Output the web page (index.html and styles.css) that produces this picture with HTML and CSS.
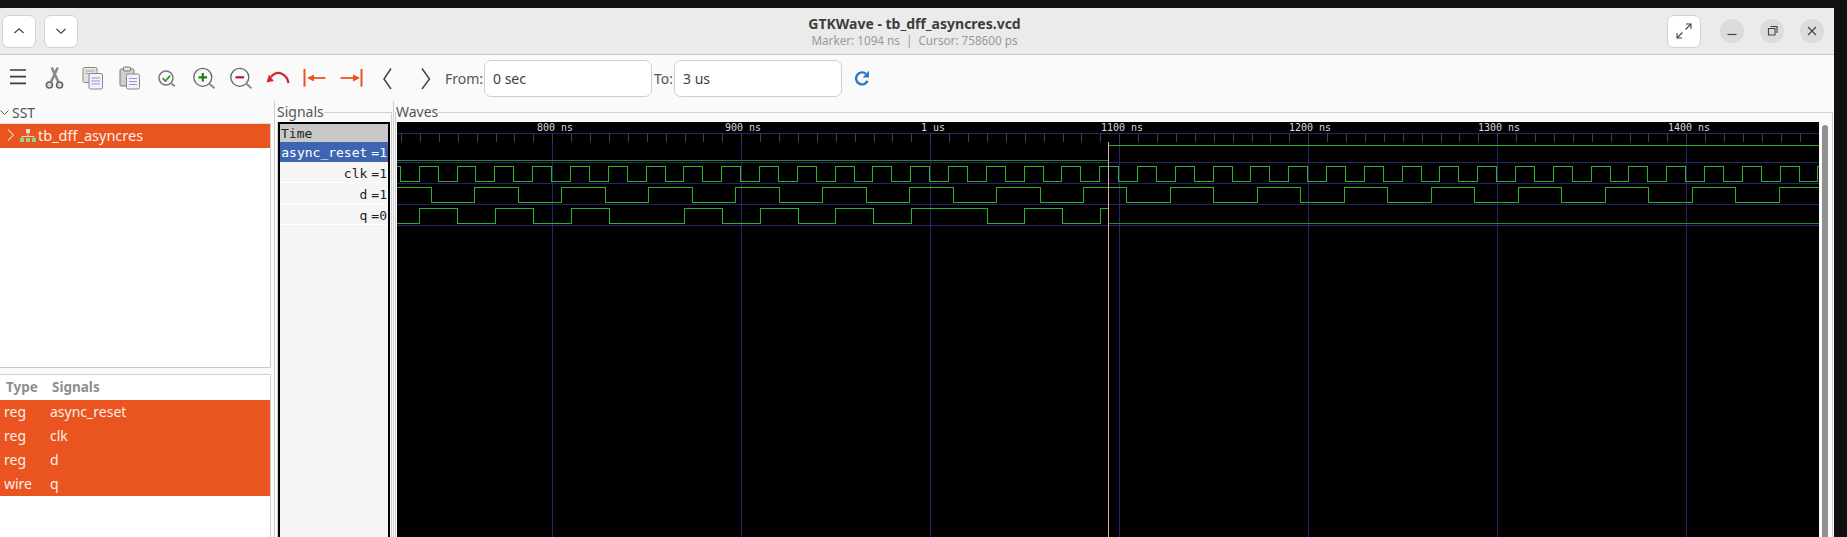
FILE: index.html
```html
<!DOCTYPE html>
<html lang="en">
<head>
    <meta charset="UTF-8">
    <title>GTKWave - tb_dff_asyncres.vcd</title>
    <link rel="stylesheet" href="styles.css">
</head>
<body>
<div class="window">
    <header class="titlebar">
        <div class="title-left">
            <button class="head-btn"><svg width="14" height="14" viewBox="0 0 14 14"><path d="M2.5 9L7 4.8 11.5 9" fill="none" stroke="#444" stroke-width="1.2"/></svg></button>
            <button class="head-btn"><svg width="14" height="14" viewBox="0 0 14 14"><path d="M2.5 5L7 9.2 11.5 5" fill="none" stroke="#444" stroke-width="1.2"/></svg></button>
        </div>
        <div class="title-text">
            <div class="title-main">GTKWave - tb_dff_asyncres.vcd</div>
            <div class="title-sub">Marker: 1094 ns &nbsp;|&nbsp; Cursor: 758600 ps</div>
        </div>
        <div class="title-right">
            <button class="head-btn expand"><svg width="18" height="18" viewBox="0 0 18 18"><path d="M10.5 7.5L16 2M11 2h5v5M7.5 10.5L2 16M2 11v5h5" fill="none" stroke="#444" stroke-width="1.1"/></svg></button>
            <button class="win-btn"><svg width="14" height="14" viewBox="0 0 14 14"><path d="M2.5 10.5h9" stroke="#444" stroke-width="1.2"/></svg></button>
            <button class="win-btn"><svg width="14" height="14" viewBox="0 0 14 14"><path d="M3.5 4.5h6.5v6.5H3.5zM5.5 2.5h6.5v6.5" fill="none" stroke="#444" stroke-width="1.1"/></svg></button>
            <button class="win-btn"><svg width="14" height="14" viewBox="0 0 14 14"><path d="M3 3l8 8M11 3l-8 8" stroke="#444" stroke-width="1.2"/></svg></button>
        </div>
    </header>

    <div class="toolbar">
        <button class="tool"><svg width="24" height="24" viewBox="0 0 24 24"><path d="M3 4h16M3 10.7h16M3 17.3h16" stroke="#3d3d3d" stroke-width="1.7"/></svg></button>
        <button class="tool"><svg width="24" height="24" viewBox="0 0 24 24"><path d="M7 16L13.7 1.5M14.4 16L7.7 1.5" stroke="#8a8a8a" stroke-width="2.6" fill="none"/><circle cx="5.4" cy="19" r="3" fill="#ddd" stroke="#666" stroke-width="1.6"/><circle cx="15.6" cy="19" r="3" fill="#ddd" stroke="#666" stroke-width="1.6"/></svg></button>
        <button class="tool"><svg width="24" height="24" viewBox="0 0 24 24"><rect x="2" y="1.5" width="14" height="15" rx="1.5" fill="#e2e2e2" stroke="#8a8a8a"/><path d="M4.5 5h9M4.5 7.5h9" stroke="#aaa"/><rect x="8" y="7.5" width="13.5" height="15.5" rx="1.5" fill="#f2f2fa" stroke="#888"/><path d="M10.5 12h8.5M10.5 15h8.5M10.5 18h8.5" stroke="#9094d4"/></svg></button>
        <button class="tool"><svg width="24" height="24" viewBox="0 0 24 24"><rect x="2" y="3" width="14" height="17" rx="1.5" fill="#d0d0d0" stroke="#777"/><rect x="5.5" y="1" width="7" height="4" rx="1" fill="#e4e4e4" stroke="#777"/><rect x="8.5" y="8" width="13" height="15" rx="1.5" fill="#f2f2fa" stroke="#888"/><path d="M11 12.5h8M11 15.5h8M11 18.5h8" stroke="#9094d4"/></svg></button>
        <button class="tool"><svg width="24" height="24" viewBox="0 0 24 24"><circle cx="11" cy="12" r="7" fill="#fafafa" stroke="#777" stroke-width="1.5"/><path d="M16 17l3.7 3.2" stroke="#8a8a8a" stroke-width="2"/><path d="M7.6 12.2l2.8 2.9 4.8-5.4" fill="none" stroke="#3a9a3a" stroke-width="1.9"/></svg></button>
        <button class="tool"><svg width="24" height="24" viewBox="0 0 24 24"><circle cx="10.8" cy="11.3" r="9" fill="#fafafa" stroke="#666" stroke-width="1.3"/><path d="M17.3 17.8l5.2 4.5" stroke="#8a8a8a" stroke-width="2"/><path d="M6.5 11.3h8.6M10.8 7v8.6" stroke="#1a7f1a" stroke-width="2.2"/></svg></button>
        <button class="tool"><svg width="24" height="24" viewBox="0 0 24 24"><circle cx="10.8" cy="11.3" r="9" fill="#fafafa" stroke="#666" stroke-width="1.3"/><path d="M17.3 17.8l5.2 4.5" stroke="#8a8a8a" stroke-width="2"/><path d="M6.5 11.3h8.6" stroke="#b8143c" stroke-width="2.2"/></svg></button>
        <button class="tool"><svg width="24" height="24" viewBox="0 0 24 24"><path d="M22.5 17C21 9 12 2.5 5 11" fill="none" stroke="#d8252f" stroke-width="2.3"/><path d="M0.5 16.5L7.8 15 3 8.5z" fill="#d8252f"/></svg></button>
        <button class="tool"><svg width="24" height="24" viewBox="0 0 24 24"><path d="M1.5 3v17.7" stroke="#e8551f" stroke-width="2"/><path d="M8 12h14.5" stroke="#e8551f" stroke-width="1.8"/><path d="M4 12l7-3.5v7z" fill="#e8551f"/></svg></button>
        <button class="tool"><svg width="24" height="24" viewBox="0 0 24 24"><path d="M21.5 3v17.7" stroke="#e8551f" stroke-width="2"/><path d="M.5 12H15" stroke="#e8551f" stroke-width="1.8"/><path d="M20 12l-7-3.5v7z" fill="#e8551f"/></svg></button>
        <button class="tool"><svg width="24" height="24" viewBox="0 0 24 24"><path d="M14 2.5L7 13l7 10" fill="none" stroke="#444" stroke-width="1.5"/></svg></button>
        <button class="tool"><svg width="24" height="24" viewBox="0 0 24 24"><path d="M8 2.5L15.5 13 8 23" fill="none" stroke="#444" stroke-width="1.5"/></svg></button>
        <label class="range-label from-label">From:</label>
        <input class="range-input" type="text" value="0 sec">
        <label class="range-label to-label">To:</label>
        <input class="range-input" type="text" value="3 us">
        <button class="refresh"><svg width="16" height="16" viewBox="0 0 16 16"><path d="M13.6 10.8A6 6 0 1 1 12 3.8" fill="none" stroke="#2a7ac8" stroke-width="2.4"/><path d="M15 .8v6.6H8.6z" fill="#2a7ac8"/></svg></button>
    </div>

    <main class="panes">
        <aside class="left-pane">
            <div class="sst-label"><svg width="9" height="9" viewBox="0 0 9 9"><path d="M.5 2.5L4.5 6.5 8.5 2.5" fill="none" stroke="#555"/></svg>SST</div>
            <div class="sst-tree">
                <div class="tree-row">
                    <svg class="tree-arrow" width="8" height="14" viewBox="0 0 8 14"><path d="M1 1.5L6.5 7 1 12.5" fill="none" stroke="#f8c8b0" stroke-width="1.1"/></svg>
                    <svg class="tree-icon" width="16" height="13" viewBox="0 0 16 13"><rect x="6" y="0" width="4" height="4" fill="#e8dcdc"/><path d="M8 4v3.5M2 9.5V7.5h12v2" fill="none" stroke="#f2d8c8"/><rect x="0" y="9" width="4" height="4" fill="#93d580"/><rect x="6" y="9" width="4" height="4" fill="#93d580"/><rect x="12" y="9" width="4" height="4" fill="#93d580"/></svg>
                    tb_dff_asyncres
                </div>
            </div>
            <div class="sig-panel">
                <div class="sig-head"><span class="col-type">Type</span><span class="col-name">Signals</span></div>
                <div class="sig-row"><span class="col-type">reg</span><span class="col-name">async_reset</span></div>
                <div class="sig-row"><span class="col-type">reg</span><span class="col-name">clk</span></div>
                <div class="sig-row"><span class="col-type">reg</span><span class="col-name">d</span></div>
                <div class="sig-row"><span class="col-type">wire</span><span class="col-name">q</span></div>
            </div>
        </aside>

        <div class="signals-pane">
            <fieldset class="frame signals-frame">
                <legend>Signals</legend>
                <div class="signal-list">
                    <div class="sl-time">Time</div>
                    <div class="sl-row sl-active">async_reset<span>=1</span></div>
                    <div class="sl-row">clk<span>=1</span></div>
                    <div class="sl-row">d<span>=1</span></div>
                    <div class="sl-row">q<span>=0</span></div>
                </div>
            </fieldset>
        </div>

        <fieldset class="frame waves-frame">
            <legend>Waves</legend>
            <div class="waves-body">
                <svg class="waves" width="1422" height="415" viewBox="397 122 1422 415" shape-rendering="crispEdges">
                    <rect x="397" y="122" width="1422" height="415" fill="#000"/>
                    <g class="grid">
                        <path d="M397 133.5H1819M397 162.5H1819M397 183.5H1819M397 204.5H1819M397 225.5H1819"/>
                        <path d="M552.5 133V537M741.5 133V537M930.5 133V537M1119.5 133V537M1308.5 133V537M1497.5 133V537M1686.5 133V537"/>
                    </g>
                    <line class="ticks" x1="401" y1="137.5" x2="1819" y2="137.5"/>
                    <g class="time-labels">
                        <text x="537" y="131">800 ns</text>
                        <text x="725" y="131">900 ns</text>
                        <text x="921" y="131">1 us</text>
                        <text x="1101" y="131">1100 ns</text>
                        <text x="1289" y="131">1200 ns</text>
                        <text x="1478" y="131">1300 ns</text>
                        <text x="1668" y="131">1400 ns</text>
                    </g>
                    <path class="wave-flat" d="M397 160.5H1108.5"/>
                    <path class="wave" d="M1108.5 145.5H1819"/>
                    <path class="wave" d="M397 166.5h3.4v15
                        h18.9v-15h18.9v15h18.9v-15h18.9v15h18.9v-15h18.9v15h18.9v-15h18.9v15h18.9v-15h18.9v15
                        h18.9v-15h18.9v15h18.9v-15h18.9v15h18.9v-15h18.9v15h18.9v-15h18.9v15h18.9v-15h18.9v15
                        h18.9v-15h18.9v15h18.9v-15h18.9v15h18.9v-15h18.9v15h18.9v-15h18.9v15h18.9v-15h18.9v15
                        h18.9v-15h18.9v15h18.9v-15h18.9v15h18.9v-15h18.9v15h18.9v-15h18.9v15h18.9v-15h18.9v15
                        h18.9v-15h18.9v15h18.9v-15h18.9v15h18.9v-15h18.9v15h18.9v-15h18.9v15h18.9v-15h18.9v15
                        h18.9v-15h18.9v15h18.9v-15h18.9v15h18.9v-15h18.9v15h18.9v-15h18.9v15h18.9v-15h18.9v15
                        h18.9v-15h18.9v15h18.9v-15h18.9v15h18.9v-15h18.9v15h18.9v-15h18.9v15h18.9v-15h18.9v15
                        h18.9v-15h18.9v15h18.9v-15h18.9v15
                        h18.9v-15h1.1"/>
                    <path class="wave" d="M397 187.5H431V202.5H474.5V187.5H518V202.5H561.5V187.5H605V202.5H648.5V187.5H692V202.5H735.5V187.5H779.5V202.5H822.5V187.5H866.5V202.5H909.5V187.5H953.5V202.5H996.5V187.5H1040.5V202.5H1083.5V187.5H1126.5V202.5H1170.5V187.5H1213.5V202.5H1257.5V187.5H1300.5V202.5H1344.5V187.5H1387.5V202.5H1431.5V187.5H1474.5V202.5H1518.5V187.5H1561.5V202.5H1605.5V187.5H1648.5V202.5H1692.5V187.5H1735.5V202.5H1779.5V187.5H1819"/>
                    <path class="wave" d="M397 223.5H419.5V208.5H457.5V223.5H495.5V208.5H533.5V223.5H571V208.5H609V223.5H684.5V208.5H722.5V223.5H760.5V208.5H798.5V223.5H835.5V208.5H873.5V223.5H911.5V208.5H987.5V223.5H1024.5V208.5H1062.5V223.5H1100.5V208.5H1108.5"/>
                    <path class="wave-flat" d="M1108.5 223.5H1819"/>
                    <path class="marker" d="M1108.5 142V537"/>
                </svg>
                <div class="scrollbar"></div>
            </div>
        </fieldset>
    </main>
</div>
</body>
</html>
```

FILE: styles.css
```css
* {
    box-sizing: border-box;
}
html, body {
    margin: 0;
    height: 100%;
}
body {
    background: #111;
    overflow: hidden;
    padding-top: 8px;
    font-family: "Noto Sans", sans-serif;
    color: #3d3d3d;
}
button {
    padding: 0;
    font: inherit;
    cursor: pointer;
}
svg {
    display: block;
}
.window {
    width: 1834px;
    height: 529px;
    background: #fafafa;
    display: flex;
    flex-direction: column;
    overflow: hidden;
}

/* title bar */
.titlebar {
    height: 47px;
    flex: none;
    display: grid;
    grid-template-columns: 1fr auto 1fr;
    align-items: center;
    background: #ebebeb;
    border-bottom: 1px solid #c8c8c8;
}
.title-left {
    display: flex;
    gap: 8px;
    padding-left: 2px;
}
.title-right {
    display: flex;
    align-items: center;
    justify-content: flex-end;
    padding-right: 10px;
}
.head-btn {
    width: 34px;
    height: 33px;
    display: flex;
    align-items: center;
    justify-content: center;
    background: #fff;
    border: 1px solid #d2d2d2;
    border-radius: 7px;
}
.expand {
    margin-right: 3px;
}
.win-btn {
    width: 24px;
    height: 24px;
    margin-left: 16px;
    display: flex;
    align-items: center;
    justify-content: center;
    background: #dcdcdc;
    border: none;
    border-radius: 50%;
}
.title-text {
    text-align: center;
    padding-right: 5px;
}
.title-main {
    font-size: 14px;
    line-height: 18px;
    font-weight: 700;
}
.title-sub {
    font-size: 11.7px;
    line-height: 15px;
    color: #999;
}

/* toolbar */
.toolbar {
    height: 46px;
    flex: none;
    display: flex;
    align-items: center;
}
.tool {
    width: 37px;
    height: 32px;
    flex: none;
    display: flex;
    align-items: center;
    justify-content: center;
    background: none;
    border: none;
}
.range-label {
    font-size: 14px;
    color: #555;
}
.from-label {
    margin-left: 1px;
    width: 39px;
}
.to-label {
    margin-left: 2px;
    width: 20px;
}
.range-input {
    width: 168px;
    height: 37px;
    padding: 0 8px;
    font: 14px "Noto Sans", sans-serif;
    color: #3d3d3d;
    background: #fff;
    border: 1px solid #cfcfcf;
    border-radius: 7px;
}
.refresh {
    margin-left: 12px;
    background: none;
    border: none;
}

/* panes */
.panes {
    flex: 1;
    min-height: 0;
    display: flex;
}
.left-pane {
    width: 275px;
    flex: none;
    display: flex;
    flex-direction: column;
    border-right: 1px solid #d0d0d0;
}
.sst-label {
    height: 22px;
    display: flex;
    align-items: center;
    gap: 3px;
    font-size: 14px;
    color: #555;
}
.sst-tree {
    width: 271px;
    height: 245px;
    flex: none;
    background: #fff;
    border-top: 1px solid #ddd;
    border-right: 1px solid #d0d0d0;
    border-bottom: 1px solid #c8c8c8;
}
.tree-row {
    height: 24px;
    padding-bottom: 2px;
    display: flex;
    align-items: center;
    background: #e95420;
    color: #fdeee6;
    font-size: 14.5px;
}
.tree-arrow {
    margin-left: 7px;
    margin-right: 5px;
}
.tree-icon {
    margin-right: 2px;
}
.sig-panel {
    width: 271px;
    flex: 1;
    margin-top: 6px;
    background: #fff;
    border-top: 1px solid #d0d0d0;
    border-right: 1px solid #d0d0d0;
}
.sig-head, .sig-row {
    display: flex;
    align-items: center;
    padding-bottom: 2px;
}
.sig-head {
    height: 25px;
    font-size: 13.5px;
    font-weight: 700;
    color: #8f8f8f;
}
.sig-row {
    height: 24px;
    background: #e95420;
    color: #fdeee6;
    font-size: 14px;
}
.col-type {
    width: 50px;
    padding-left: 4px;
}
.sig-head .col-type {
    width: 52px;
    padding-left: 6px;
}

/* frames */
.frame {
    margin: 1px 0 0;
    padding: 0;
    min-width: 0;
    border: 1px solid #d0d0d0;
    border-bottom: none;
}
.frame legend {
    padding: 0;
    height: 20px;
    font-size: 14px;
    line-height: 20px;
    color: #555;
}
.signals-pane {
    width: 119px;
    flex: none;
    padding-left: 2px;
    display: flex;
    border-right: 1px solid #d0d0d0;
}
.signals-frame {
    width: 115px;
}
.signals-frame legend {
    margin-left: -1px;
}
.signal-list {
    width: 112px;
    height: 420px;
    background: #f5f5f5;
    border: 2px solid #000;
    border-bottom: none;
    font: 13px "DejaVu Sans Mono", monospace;
}
.sl-time {
    height: 18px;
    padding-left: 1px;
    line-height: 20px;
    color: #222;
    background: #c8c8c8;
}
.sl-row {
    height: 21px;
    padding-right: 1px;
    line-height: 23px;
    text-align: right;
    color: #222;
    border-bottom: 1px solid #fff;
}
.sl-row span {
    margin-left: 4px;
}
.sl-active {
    height: 20px;
    line-height: 22px;
    color: #fff;
    background: #3f65b2;
    border-bottom: none;
}
.waves-frame {
    flex: 1;
    margin-left: 1px;
    margin-right: 1px;
}
.waves-body {
    display: flex;
    padding-left: 1px;
}
.scrollbar {
    width: 6px;
    height: 420px;
    margin-left: 3px;
    margin-top: 3px;
    background: #919191;
    border-radius: 3px;
}

/* wave canvas */
.grid path {
    fill: none;
    stroke: #25256e;
}
.ticks {
    stroke: #333f66;
    stroke-width: 9;
    stroke-dasharray: 1 17.9;
}
.time-labels text {
    font: 10px "DejaVu Sans Mono", monospace;
    fill: #d8d8d8;
}
.wave {
    fill: none;
    stroke: #2fb12f;
}
.wave-flat {
    fill: none;
    stroke: #1f8a2f;
}
.marker {
    stroke: #e8a6a0;
}
```
